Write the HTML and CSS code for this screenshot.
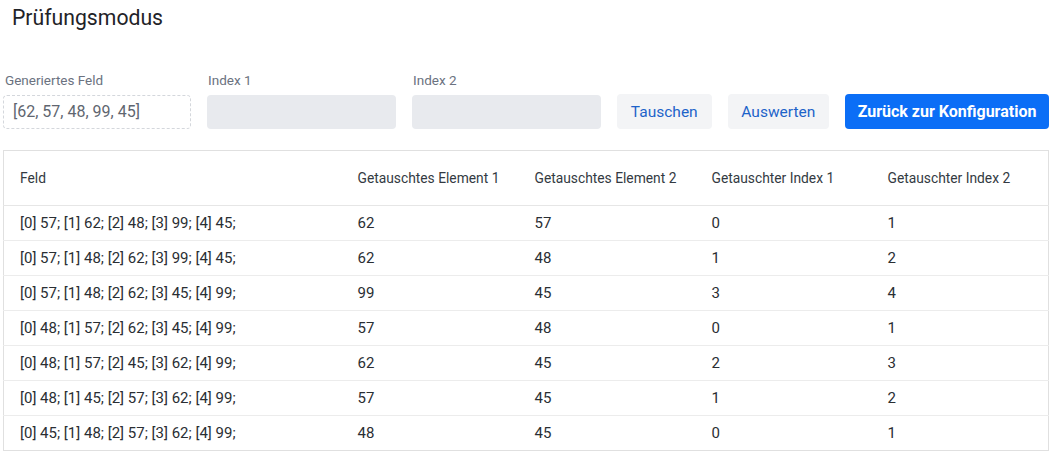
FILE: index.html
```html
<!DOCTYPE html>
<html lang="de">
<head>
<meta charset="utf-8">
<title>Prüfungsmodus</title>
<link rel="stylesheet" href="styles.css">
</head>
<body>
<div class="page">
  <h1 class="title">Prüfungsmodus</h1>
  <div class="controls">
    <div class="field">
      <label class="label">Generiertes Feld</label>
      <div class="input input-dashed">[62, 57, 48, 99, 45]</div>
    </div>
    <div class="field">
      <label class="label">Index 1</label>
      <div class="input input-filled"></div>
    </div>
    <div class="field">
      <label class="label">Index 2</label>
      <div class="input input-filled"></div>
    </div>
    <button class="btn btn-light btn-tauschen">Tauschen</button>
    <button class="btn btn-light btn-auswerten">Auswerten</button>
    <button class="btn btn-primary">Zurück zur Konfiguration</button>
  </div>
  <table class="grid">
    <colgroup>
      <col class="c1"><col class="c2"><col class="c3"><col class="c4"><col>
    </colgroup>
    <thead>
      <tr><th>Feld</th><th>Getauschtes Element 1</th><th>Getauschtes Element 2</th><th>Getauschter Index 1</th><th>Getauschter Index 2</th></tr>
    </thead>
    <tbody>
      <tr><td>[0] 57; [1] 62; [2] 48; [3] 99; [4] 45;</td><td>62</td><td>57</td><td>0</td><td>1</td></tr>
      <tr><td>[0] 57; [1] 48; [2] 62; [3] 99; [4] 45;</td><td>62</td><td>48</td><td>1</td><td>2</td></tr>
      <tr><td>[0] 57; [1] 48; [2] 62; [3] 45; [4] 99;</td><td>99</td><td>45</td><td>3</td><td>4</td></tr>
      <tr><td>[0] 48; [1] 57; [2] 62; [3] 45; [4] 99;</td><td>57</td><td>48</td><td>0</td><td>1</td></tr>
      <tr><td>[0] 48; [1] 57; [2] 45; [3] 62; [4] 99;</td><td>62</td><td>45</td><td>2</td><td>3</td></tr>
      <tr><td>[0] 48; [1] 45; [2] 57; [3] 62; [4] 99;</td><td>57</td><td>45</td><td>1</td><td>2</td></tr>
      <tr><td>[0] 45; [1] 48; [2] 57; [3] 62; [4] 99;</td><td>48</td><td>45</td><td>0</td><td>1</td></tr>
    </tbody>
  </table>
</div>
</body>
</html>
```
FILE: styles.css
```css
html, body {
  margin: 0;
  padding: 0;
  background: #ffffff;
}
body {
  font-family: Roboto, "Liberation Sans", Arial, sans-serif;
  color: #212529;
}
.page {
  padding: 0 6px 0 3px;
}
.title {
  margin: 0;
  padding: 5px 0 0 9px;
  font-size: 21.2px;
  font-weight: 400;
  line-height: 26px;
  color: #1f2328;
}
.controls {
  display: flex;
  align-items: flex-end;
  gap: 16px;
  margin-top: 40px;
}
.field {
  display: flex;
  flex-direction: column;
}
.label {
  font-size: 13.5px;
  line-height: 18px;
  color: #6b7280;
  padding-left: 2px;
  margin-bottom: 6px;
}
.field:not(:first-child) .label {
  padding-left: 1px;
}
.input {
  width: 189px;
  height: 34px;
  box-sizing: border-box;
  border-radius: 4px;
  font-size: 16px;
  line-height: 32px;
}
.input-dashed {
  width: 188px;
  border: 1px dashed #d4d7dc;
  padding-left: 9px;
  color: #5f6670;
}
.input-filled {
  background: #e8eaee;
}
.btn {
  height: 35px;
  border: none;
  border-radius: 4px;
  font-family: Roboto, "Liberation Sans", Arial, sans-serif;
  font-size: 15.5px;
  padding: 0;
  cursor: pointer;
}
.btn-light {
  background: #f3f4f6;
  color: #1d63c9;
}
.btn-tauschen {
  width: 95px;
}
.btn-auswerten {
  width: 102px;
}
.btn-primary {
  width: 205px;
  background: #0b6ef6;
  color: #ffffff;
  font-weight: 700;
  font-size: 16px;
}
.grid {
  margin-top: 21px;
  width: 1046px;
  border-collapse: collapse;
  table-layout: fixed;
  border: 1px solid #e0e0e0;
}
.c1 { width: 338px; }
.c2 { width: 177px; }
.c3 { width: 177px; }
.c4 { width: 176px; }
.grid th {
  height: 54px;
  text-align: left;
  font-size: 13.8px;
  font-weight: 400;
  color: #333a42;
  padding: 0 0 0 16px;
  border-bottom: 1px solid #e6e6e6;
}
.grid td {
  height: 34px;
  font-size: 15px;
  color: #2a2e33;
  padding: 0 0 0 16px;
  border-bottom: 1px solid #ececec;
}
.grid tbody tr:last-child td {
  border-bottom: 1px solid #e0e0e0;
}
```
